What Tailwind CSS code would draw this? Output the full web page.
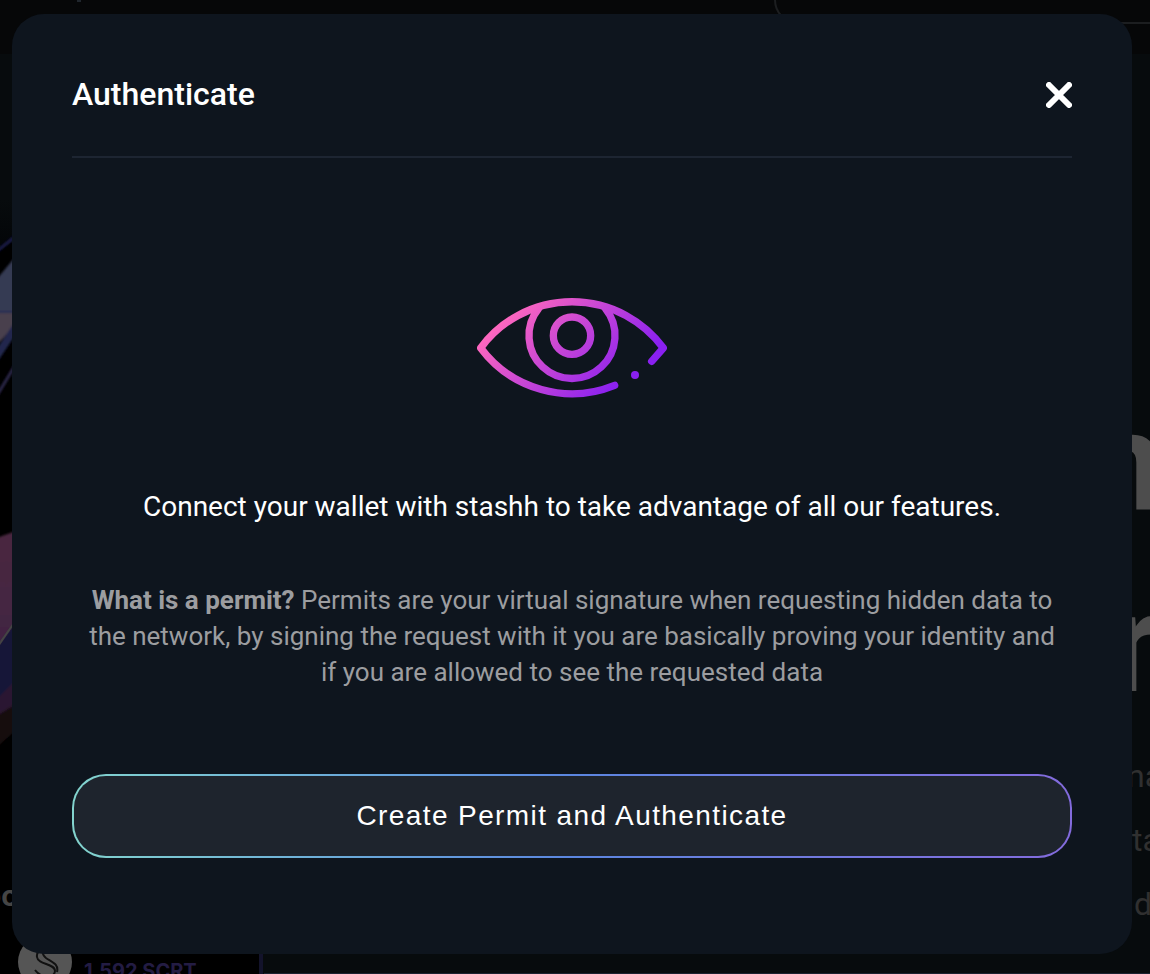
<!DOCTYPE html>
<html lang="en">
<head>
<meta charset="utf-8">
<meta name="viewport" content="width=device-width, initial-scale=1">
<title>Authenticate</title>
<script src="https://cdn.jsdelivr.net/npm/@tailwindcss/browser@4"></script>
</head>
<body class="relative min-h-screen overflow-hidden bg-[#070b0d] font-['Roboto',sans-serif] text-white">

<!-- Dimmed page behind the dialog -->
<div class="absolute inset-0 overflow-hidden" aria-hidden="true">
  <div class="absolute inset-x-0 top-0 h-[54px] bg-[#060708]"></div>
  <div class="absolute left-[77px] top-0 h-[2px] w-1 bg-[#20262d]"></div>
  <div class="absolute -top-16 left-[774px] h-[88px] w-[420px] rounded-3xl border-2 border-[#1c1e20]"></div>
  <svg class="absolute left-0 top-[200px] h-[774px] w-[270px]" viewBox="0 200 270 774">
    <defs>
      <linearGradient id="art" x1="0" y1="0" x2="0" y2="1"><stop offset="0" stop-color="#4a2840"/><stop offset="1" stop-color="#412444"/></linearGradient>
      <linearGradient id="fade" x1="0" y1="0" x2="0" y2="1"><stop offset="0" stop-color="#070b0d"/><stop offset="1" stop-color="#030507"/></linearGradient>
      <filter id="soft"><feGaussianBlur stdDeviation="1"/></filter>
    </defs>
    <path d="M0 240H262V974H0Z" fill="#000"/>
    <path d="M0 200H20V236L0 250Z" fill="url(#fade)"/>
    <g filter="url(#soft)">
      <path d="M-4 252L16 236" stroke="#1c1f48" stroke-width="3"/>
      <path d="M-4 280L16 256V312H-4Z" fill="#363a52"/>
      <path d="M-4 312H16V324L-4 346Z" fill="#4a404e"/>
      <path d="M-4 312H16" stroke="#252b52" stroke-width="2"/>
      <path d="M-4 350L16 320V334L-4 364Z" fill="#20264e"/>
      <path d="M-4 397L16 364" stroke="#2b274a" stroke-width="3"/>
      <path d="M-4 538L16 531V622L-4 650Z" fill="url(#art)"/>
      <path d="M-4 648L16 622V684L-4 702Z" fill="#181938"/>
      <path d="M-4 700L16 680V708L-4 720Z" fill="#2c1830"/>
      <path d="M-4 716L16 704V730L-4 748Z" fill="#190c10"/>
    </g>
    <path d="M-2 646L14 623" stroke="#444" stroke-width="2"/>
    <path d="M261 940V974" stroke="#13132b" stroke-width="4"/>
    <circle cx="45" cy="962" r="27" fill="#555"/>
    <path d="M53 953C47 947 36 949 37 957C38 965 55 963 55 971C54 979 41 978 35 970M48 950C41 949 42 955 46 958C52 962 59 964 57 972" fill="none" stroke="#111" stroke-width="2"/>
  </svg>
  <span class="absolute left-[-16px] top-[876px] font-[Inter,sans-serif] text-[28px] font-bold leading-10 text-[#454545]">oc</span>
  <span class="absolute left-[84px] top-[936px] font-[Inter,sans-serif] text-lg leading-5 text-[#1c1c1c]">Current bid</span>
  <span class="absolute left-[84px] top-[961px] whitespace-nowrap font-[Inter,sans-serif] text-xl font-bold leading-5 text-[#231c43]">1,592 SCRT</span>
  <span class="absolute left-[1085px] top-[391px] text-[140px] font-bold leading-[140px] text-[#4d4d4d]">n</span>
  <span class="absolute left-[1109px] top-[573px] text-[140px] font-bold leading-[140px] text-[#4d4d4d]">r</span>
  <span class="absolute left-[1127px] top-[756px] text-[32px] leading-10 text-[#303030]">na</span>
  <span class="absolute left-[1132px] top-[820px] text-[32px] leading-10 text-[#303030]">ta</span>
  <span class="absolute left-[1134px] top-[884px] text-[32px] leading-10 text-[#303030]">d</span>
  <div class="absolute bottom-0 left-[264px] right-0 h-px bg-[#1a2230]"></div>
</div>

<main role="dialog" aria-modal="true" aria-labelledby="dialog-title" class="relative mb-5 ml-3 mr-[18px] mt-[14px] rounded-[32px] bg-[#0e151e] px-[60px] pb-24 pt-[60px]">
  <header class="flex items-start justify-between border-b-2 border-[#1d2532] pb-[42px]">
    <h1 id="dialog-title" class="text-[32px] font-medium leading-10">Authenticate</h1>
    <button type="button" aria-label="Close" class="mt-2 cursor-pointer">
      <svg class="size-[26px]" viewBox="0 0 26 26" fill="none" stroke="currentColor" stroke-width="6" stroke-linecap="round"><path d="M3 3L23 23M23 3L3 23"/></svg>
    </button>
  </header>

  <section class="flex flex-col items-center text-center">
    <svg class="mt-[140px] h-[100px] w-[190px]" viewBox="51 53 570 300" fill="none" aria-hidden="true">
      <defs>
        <linearGradient id="eye" gradientUnits="userSpaceOnUse" x1="120" y1="120" x2="395" y2="395"><stop stop-color="#ff68be"/><stop offset="1" stop-color="#8a20f0"/></linearGradient>
      </defs>
      <g stroke="url(#eye)" stroke-width="22" stroke-linecap="round" stroke-linejoin="round">
        <path d="M575 243L610 203A340 340 0 0 0 62 203A342 342 0 0 0 464 315"/>
        <path d="M236 84A129 129 0 1 0 436 84"/>
        <circle cx="336" cy="166" r="56"/>
      </g>
      <circle cx="525" cy="284" r="12" fill="url(#eye)"/>
    </svg>
    <h2 class="mt-[89px] text-[28px] leading-10">Connect your wallet with stashh to take advantage of all our features.</h2>
    <p class="mt-[55px] px-4 text-[26px] leading-[36px] text-[#9c9da0]"><strong class="font-bold">What is a permit?</strong> Permits are your virtual signature when requesting hidden data to the network, by signing the request with it you are basically proving your identity and if you are allowed to see the requested data</p>
  </section>

  <div class="mt-[84px] rounded-[34px] bg-linear-to-r from-[#83d4ce] via-[#5b86e0] to-[#836bdd] p-[2px]">
    <button type="button" class="block h-20 w-full cursor-pointer rounded-[32px] bg-[#1e242d] px-6 font-['Liberation_Sans',sans-serif] text-[28px] tracking-wider">Create Permit and Authenticate</button>
  </div>
</main>
</body>
</html>
